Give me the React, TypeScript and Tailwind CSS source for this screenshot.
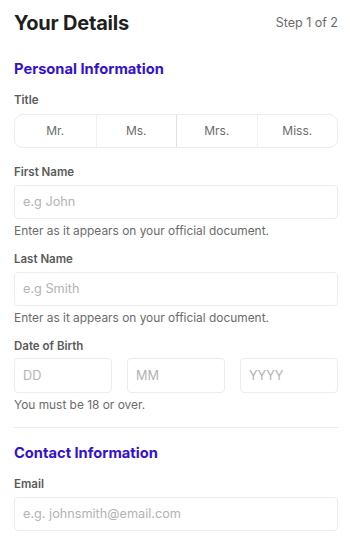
import React from "react";

function Label({ children, className = "" }: { children: React.ReactNode; className?: string }) {
  return <div className={`text-[11.5px] font-semibold text-[#5a5a5a] leading-[14px] ${className}`}>{children}</div>;
}

function Input({ placeholder, className = "" }: { placeholder: string; className?: string }) {
  return (
    <div className={`h-[34px] rounded-[4px] border border-[#ececec] bg-white flex items-center px-[8px] text-[12.7px] text-[#b3b3b3] ${className}`}>
      {placeholder}
    </div>
  );
}

function Helper({ children }: { children: React.ReactNode }) {
  return <div className="mt-[4px] text-[11.9px] text-[#6b6b6b] leading-[15px]">{children}</div>;
}

export default function App() {
  const titles = ["Mr.", "Ms.", "Mrs.", "Miss."];
  return (
    <div className="w-[350px] h-[541px] overflow-hidden bg-white pl-[14px] pr-[12px] pt-[10px]" style={{ fontFamily: "Inter, 'Noto Sans', sans-serif" }}>
      <div className="flex items-center justify-between h-[26px]">
        <div className="text-[20px] font-bold text-[#1f1f1f] tracking-[-0.2px]">Your Details</div>
        <div className="text-[12.5px] text-[#6b6b6b]">Step 1 of 2</div>
      </div>
      <div className="mt-[24px] text-[14.7px] font-bold text-[#3511cf] leading-[18px]">Personal Information</div>
      <Label className="mt-[15px]">Title</Label>
      <div className="mt-[7px] h-[34px] rounded-[9px] border border-[#ececec] grid grid-cols-4 overflow-hidden">
        {titles.map((t, i) => (
          <div
            key={t}
            className={`flex items-center justify-center text-[12px] text-[#6b6b6b] ${i > 0 ? (i === 2 ? "border-l border-[#e0e0e0]" : "border-l border-[#f0f0f0]") : ""}`}
          >
            {t}
          </div>
        ))}
      </div>
      <Label className="mt-[17px]">First Name</Label>
      <Input placeholder="e.g John" className="mt-[6px]" />
      <Helper>Enter as it appears on your official document.</Helper>
      <Label className="mt-[14px]">Last Name</Label>
      <Input placeholder="e.g Smith" className="mt-[6px]" />
      <Helper>Enter as it appears on your official document.</Helper>
      <Label className="mt-[14px]">Date of Birth</Label>
      <div className="mt-[5px] grid grid-cols-3 gap-[15px]">
        <Input placeholder="DD" className="h-[35px]" />
        <Input placeholder="MM" className="h-[35px]" />
        <Input placeholder="YYYY" className="h-[35px]" />
      </div>
      <Helper>You must be 18 or over.</Helper>
      <div className="mt-[15px] border-t border-[#ececec]" />
      <div className="mt-[16px] text-[14.7px] font-bold text-[#3511cf] leading-[18px]">Contact Information</div>
      <Label className="mt-[15px]">Email</Label>
      <Input placeholder="e.g. johnsmith@email.com" className="mt-[6px]" />
    </div>
  );
}
